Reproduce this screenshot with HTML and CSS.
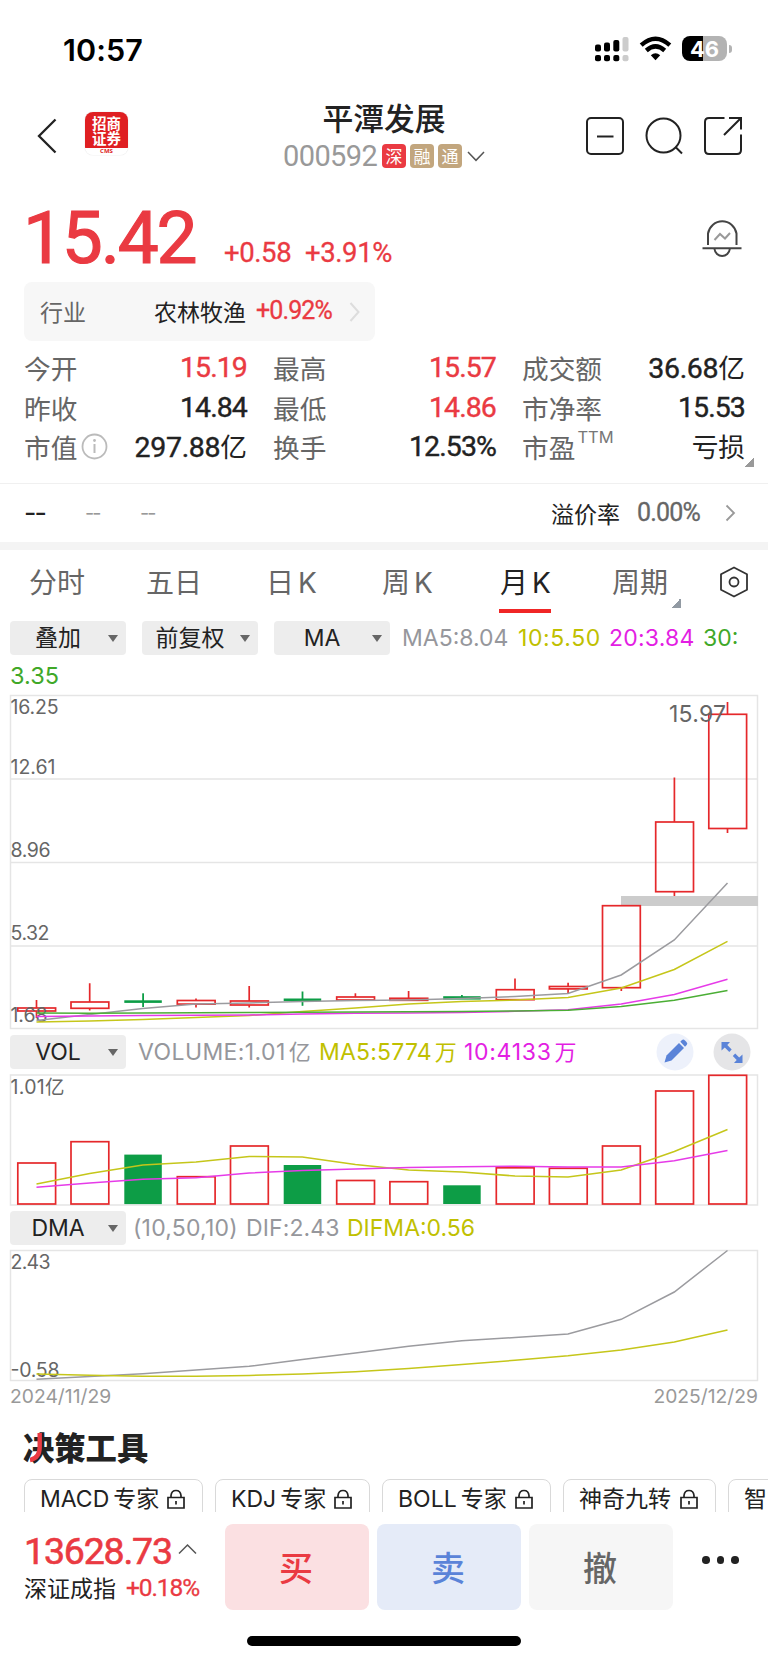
FILE: index.html
```html
<!DOCTYPE html>
<html lang="zh-CN">
<head>
<meta charset="utf-8">
<title>平潭发展 000592</title>
<link rel="stylesheet" href="styles.css">
</head>
<body>
<main class="phone">
  <div class="status">
    <span class="clock">10:57</span>
    <div class="status-icons">
      <svg width="36" height="26" viewBox="0 0 36 26">
        <g fill="#000"><rect x="1" y="8.500" width="6" height="7" rx="2"/><rect x="10" y="6.500" width="6" height="9" rx="2"/><rect x="19.300" y="4" width="6" height="11.500" rx="2"/>
        <rect x="1" y="19" width="6" height="6.300" rx="2"/><rect x="10" y="19" width="6" height="6.300" rx="2"/><rect x="19.300" y="19" width="6" height="6.300" rx="2"/></g>
        <g fill="#ccc"><rect x="28.500" y="1" width="6" height="14.500" rx="2"/><rect x="28.500" y="19" width="6" height="6.300" rx="2"/></g>
      </svg>
      <svg class="wifi" width="33" height="26" viewBox="0 0 33 26">
        <g fill="none" stroke="#000" stroke-width="4.400"><path d="M2.200 9.200Q16.500-3.600 30.800 9.200"/><path d="M7.300 14.500Q16.500 6.300 25.700 14.500"/></g>
        <path d="M16.500 24.200L11.800 19.300Q16.500 15.400 21.200 19.300Z"/>
      </svg>
      <div class="battery"><span>46</span></div><i class="nub"></i>
    </div>
  </div>

  <header class="header">
    <svg class="back" width="20" height="36" viewBox="0 0 20 36"><path d="M18.500 1.500L2 18L18.500 34.500" fill="none" stroke="#222" stroke-width="2.300"/></svg>
    <div class="logo"><span>招商</span><span>证券</span><b>CMS</b></div>
    <div class="title">
      <h1>平潭发展</h1>
      <div class="code"><span class="num">000592</span><i class="tag red">深</i><i class="tag">融</i><i class="tag">通</i>
        <svg width="18" height="11" viewBox="0 0 18 11"><path d="M1 1L9 9.300L17 1" fill="none" stroke="#555" stroke-width="1.500"/></svg></div>
    </div>
    <div class="actions">
      <svg width="40" height="40" viewBox="0 0 40 40"><rect x="2" y="2" width="36" height="36" rx="4"/><path d="M12 20.500H28.500"/></svg>
      <svg width="40" height="40" viewBox="0 0 40 40"><circle cx="19.500" cy="19.500" r="17"/><path d="M31.500 31L38 37.500"/></svg>
      <svg width="40" height="40" viewBox="0 0 40 40"><path d="M21.500 2H6Q2 2 2 6V34Q2 38 6 38H34Q38 38 38 34V18.500M26 2H38V13.500M38 2L21 19"/></svg>
    </div>
  </header>

  <section class="quote">
    <span class="price">15.42</span><span class="chg c1">+0.58</span><span class="chg">+3.91%</span>
    <svg class="bell" width="40" height="42" viewBox="0 0 40 42"><g fill="none" stroke="#444" stroke-width="2"><path d="M6 28V16.500A14.500 15 0 0 1 34.500 16.500V28"/><path d="M.5 31.300H39.500"/><path d="M12.500 32A7.700 8 0 0 0 27.800 32"/></g><path d="M12.500 23L18 17L23 21.500L28 16" fill="none" stroke="#999" stroke-width="2"/></svg>
  </section>

  <section class="industry">
    <span class="lab">行业</span><span class="name">农林牧渔</span><span class="pct">+0.92%</span>
    <svg width="12" height="22" viewBox="0 0 12 22"><path d="M1.500 2L9.500 11L1.500 20" fill="none" stroke="#ddd" stroke-width="2"/></svg>
  </section>

  <section class="stats">
    <div><span>今开</span><b class="up">15.19</b></div><div><span>最高</span><b class="up">15.57</b></div><div><span>成交额</span><b class="big">36.68<em>亿</em></b></div>
    <div><span>昨收</span><b>14.84</b></div><div><span>最低</span><b class="up">14.86</b></div><div><span>市净率</span><b>15.53</b></div>
    <div><span>市值</span><svg class="info" width="27" height="27" viewBox="0 0 27 27"><circle cx="13.500" cy="13.500" r="12" fill="none" stroke="#bbb" stroke-width="1.800"/><path d="M13.500 11V20" stroke="#bbb" stroke-width="2"/><circle cx="13.500" cy="7.500" r="1.400" fill="#bbb"/></svg><b class="big">297.88<em>亿</em></b></div><div><span>换手</span><b>12.53%</b></div><div class="pe"><span>市盈</span><sup>TTM</sup><b><em>亏损</em></b><i class="corner"></i></div>
  </section>

  <section class="premium">
    <span class="d1">--</span><span class="d2">--</span><span class="d2">--</span>
    <span class="plab">溢价率</span><span class="pval">0.00%</span>
    <svg width="11" height="18" viewBox="0 0 11 18"><path d="M1.500 1.500L9 9L1.500 16.500" fill="none" stroke="#999" stroke-width="1.800"/></svg>
  </section>

  <nav class="tabs">
    <span>分时</span><span>五日</span><span>日<i>K</i></span><span>周<i>K</i></span><span class="on">月<i>K</i></span><span class="cyc">周期<i class="corner"></i></span>
    <svg width="30" height="32" viewBox="0 0 30 32" fill="none" stroke="#333" stroke-width="1.800"><path d="M15 1.500L28 8.300V23.700L15 30.500L2 23.700V8.300Z" stroke-linejoin="round"/><circle cx="15" cy="16" r="4.500"/></svg>
  </nav>

  <section class="row main-row">
    <div class="pill">叠加</div><div class="pill wide">前复权</div><div class="pill">MA</div>
    <div class="ind"><span class="gray v1">MA5:8.04</span><span class="yel v2">10:5.50</span><span class="mag v3">20:3.84</span><span class="grn">30:</span></div>
  </section>
  <div class="wrap grn">3.35</div>

  <svg class="chart k" width="748" height="334" viewBox="10 695 748 334">
    <g class="grid"><rect x="10.500" y="695.500" width="747" height="333"/><path d="M10 779H758M10 862.500H758M10 946H758"/></g>
    <rect x="621" y="896" width="137" height="10" fill="#ccc"/>
    <g class="candle">
      <rect x="17.800" y="1008" width="37.800" height="3"/><path d="M36.500 1000V1008M36.500 1011V1018"/>
      <rect x="71" y="1002" width="37.800" height="6.300"/><path d="M89.700 983.300V1002M89.700 1008.300V1010.500"/>
      <rect x="177.300" y="1000.500" width="37.800" height="3.600"/><path d="M196 998.500V1000M196 1004V1007.500"/>
      <rect x="230.500" y="1001" width="37.800" height="4"/><path d="M249.200 986V1001M249.200 1005V1007.500"/>
      <rect x="336.700" y="997" width="37.800" height="3"/><path d="M355.400 993.300V997"/>
      <rect x="389.900" y="998.300" width="37.800" height="2"/><path d="M408.600 991V998"/>
      <rect x="496.300" y="989.700" width="37.800" height="10"/><path d="M515 978.500V989.700"/>
      <rect x="549.400" y="986.500" width="37.800" height="2.400"/><path d="M568.100 982.700V986.500M568.100 989V993.500"/>
      <rect x="602.500" y="905.700" width="37.800" height="82"/><path d="M621.300 987.700V991"/>
      <rect x="655.700" y="822" width="37.800" height="69.700"/><path d="M674.400 777.500V822M674.400 891.700V896"/>
      <rect x="708.800" y="714.300" width="37.800" height="114.200"/><path d="M727.500 702V714M727.500 828.500V833"/>
    </g>
    <g class="green">
      <rect x="124.300" y="1000.300" width="37.500" height="2.600"/><rect x="142.200" y="993.300" width="1.800" height="13.700"/>
      <rect x="283.700" y="998.500" width="37.500" height="2.600"/><rect x="301.600" y="991.500" width="1.800" height="14.300"/>
      <rect x="443.200" y="996.200" width="37.500" height="3.400"/><rect x="461" y="995" width="1.800" height="3"/>
    </g>
    <g class="axis"><text x="10.500" y="714" textLength="48">16.25</text><text x="10.500" y="774" textLength="45">12.61</text><text x="10.500" y="857" textLength="40">8.96</text><text x="10.500" y="939.500" textLength="39">5.32</text><text x="10.500" y="1022" textLength="37">1.68</text><text class="peak" x="669" y="722" textLength="57">15.97</text></g>
    <g class="lines">
      <polyline class="l-gray" points="36.500,1020.500 89.700,1014.500 142.800,1008.500 196,1004 249.200,1003 302.300,1001.500 355.400,1000.500 408.600,1000 461.800,998.500 515,996.500 568,993.500 621.200,975 674.300,940 727.500,883"/>
      <polyline class="l-yel" points="36.500,1022 89.700,1021 142.800,1019.500 196,1017.500 249.200,1015.500 302.300,1011.500 355.400,1008 408.600,1004 461.800,1001.500 515,1000 568,997.500 621.200,988 674.300,969.500 727.500,941.300"/>
      <polyline class="l-mag" points="36.500,1016.500 89.700,1016 142.800,1015.500 196,1015.300 249.200,1015 302.300,1014 355.400,1013.300 408.600,1013 461.800,1012.500 515,1011.300 568,1009.700 621.200,1004 674.300,994.500 727.500,979.300"/>
      <polyline class="l-grn" points="36.500,1013 89.700,1013.300 142.800,1013 196,1012.700 249.200,1012.500 302.300,1012.200 355.400,1012 408.600,1011.700 461.800,1011.500 515,1011 568,1010.300 621.200,1006.500 674.300,1000.300 727.500,990.500"/>
    </g>
  </svg>

  <section class="row sub-row vol-row">
    <div class="pill">VOL</div>
    <div class="ind"><span class="gray w1">VOLUME:1.01<em>亿</em></span><span class="yel w2">MA5:5774<em>万</em></span><span class="mag w3">10:4133<em>万</em></span></div>
    <svg class="tool" width="38" height="38" viewBox="0 0 38 38"><circle cx="19" cy="19" r="18.500" fill="#edf1fb"/><g fill="#5a83d8"><path d="M8.500 29.500L10.500 22.500L23 10L28 15L15.500 27.500Z"/><path d="M24.300 8.700L26 7Q27.500 6 29 7.500L30.500 9Q32 10.500 30.700 12L29 13.700Z"/></g></svg>
    <svg class="tool" width="38" height="38" viewBox="0 0 38 38"><circle cx="19" cy="19" r="18.500" fill="#e5e5e7"/><g fill="#5a83d8"><path d="M8.500 9H17L14.300 12L18.700 16.500L16.300 18.900L11.800 14.400L8.500 17.500Z"/><path d="M29.500 30H21L23.700 27L19.800 23L22.200 20.600L26.200 24.600L29.500 21.500Z"/></g></svg>
  </section>

  <svg class="chart v" width="748" height="131" viewBox="10 1075 748 131">
    <g class="grid"><rect x="10.500" y="1075" width="747" height="130"/></g>
    <g class="candle">
      <rect x="17.800" y="1163" width="37.800" height="41"/><rect x="71" y="1141.700" width="37.800" height="62.300"/><rect x="177.300" y="1176.700" width="37.800" height="27.300"/><rect x="230.500" y="1146" width="37.800" height="58"/><rect x="336.700" y="1180.500" width="37.800" height="23.500"/><rect x="389.900" y="1181.700" width="37.800" height="22.300"/><rect x="496.300" y="1167.800" width="37.800" height="36.200"/><rect x="549.400" y="1168.300" width="37.800" height="35.700"/><rect x="602.500" y="1146" width="37.800" height="58"/><rect x="655.700" y="1091" width="37.800" height="113"/><rect x="708.800" y="1075.300" width="37.800" height="128.700"/>
    </g>
    <g class="green"><rect x="124.300" y="1154.600" width="37.500" height="49.500"/><rect x="283.700" y="1165" width="37.500" height="39"/><rect x="443.200" y="1185.300" width="37.500" height="18.700"/></g>
    <g class="axis"><text x="10.500" y="1093.500" textLength="54">1.01亿</text></g>
    <g class="lines">
      <polyline class="l-yel" points="36.500,1184 89.700,1173.500 142.800,1165 196,1162 249.200,1156.500 302.300,1157 355.400,1164.500 408.600,1170 461.800,1172 515,1176 568,1177 621.200,1170 674.300,1151.500 727.500,1129.500"/>
      <polyline class="l-mag" points="36.500,1187.300 89.700,1183 142.800,1179.300 196,1177.700 249.200,1173 302.300,1170.500 355.400,1169 408.600,1167.500 461.800,1166.800 515,1166.300 568,1167 621.200,1167 674.300,1160.700 727.500,1150.500"/>
    </g>
  </svg>

  <section class="row sub-row">
    <div class="pill">DMA</div>
    <div class="ind"><span class="gray x1">(10,50,10)</span><span class="gray x2">DIF:2.43</span><span class="yel">DIFMA:0.56</span></div>
  </section>

  <svg class="chart d" width="748" height="131" viewBox="10 1250 748 131">
    <g class="grid"><rect x="10.500" y="1250.500" width="747" height="130"/></g>
    <g class="axis"><text x="10.500" y="1269" textLength="40">2.43</text><text x="10.500" y="1376.500" textLength="49">-0.58</text></g>
    <g class="lines">
      <polyline class="l-gray" points="36.500,1379.300 89.700,1376.500 142.800,1373.700 196,1370 249.200,1366.300 302.300,1359.500 355.400,1353 408.600,1346.300 461.800,1340.800 515,1337.500 568,1334 621.200,1319.300 674.300,1292 727.500,1250.500"/>
      <polyline class="l-yel" points="36.500,1374 89.700,1375.300 142.800,1376.200 196,1376.200 249.200,1375.500 302.300,1374 355.400,1371.800 408.600,1368.500 461.800,1364.500 515,1360.300 568,1355.800 621.200,1350 674.300,1342 727.500,1330"/>
    </g>
  </svg>
  <div class="dates"><span>2024/11/29</span><span>2025/12/29</span></div>

  <h2 class="tools-title">决策工具<svg width="14" height="30" viewBox="0 0 14 30"><path d="M9.700 0V14Q9.700 25 0 27" fill="none" stroke="#ea3a42" stroke-width="4.400"/></svg></h2>
  <div class="chips">
    <div class="chip a">MACD<em>专家</em><svg viewBox="0 0 18 20"><path d="M1 8.500H17V19H1ZM4 8V6.500Q4.500 1.500 9 1.500T14 6.500V8M9 12V15.500"/></svg></div>
    <div class="chip b">KDJ<em>专家</em><svg viewBox="0 0 18 20"><path d="M1 8.500H17V19H1ZM4 8V6.500Q4.500 1.500 9 1.500T14 6.500V8M9 12V15.500"/></svg></div>
    <div class="chip c">BOLL<em>专家</em><svg viewBox="0 0 18 20"><path d="M1 8.500H17V19H1ZM4 8V6.500Q4.500 1.500 9 1.500T14 6.500V8M9 12V15.500"/></svg></div>
    <div class="chip d">神奇九转<svg viewBox="0 0 18 20"><path d="M1 8.500H17V19H1ZM4 8V6.500Q4.500 1.500 9 1.500T14 6.500V8M9 12V15.500"/></svg></div>
    <div class="chip e">智能</div>
  </div>

  <footer class="trade">
    <div class="index">
      <div class="idx"><span>13628.73</span><svg width="19" height="12" viewBox="0 0 19 12"><path d="M1 10.500L9.500 2L18 10.500" fill="none" stroke="#555" stroke-width="1.500"/></svg></div>
      <div class="idx-sub"><span>深证成指</span><b>+0.18%</b></div>
    </div>
    <div class="btn buy">买</div><div class="btn sell">卖</div><div class="btn cancel">撤</div>
    <div class="more"><i></i><i></i><i></i></div>
  </footer>
  <div class="home"></div>
</main>
</body>
</html>
```

FILE: styles.css
```css
* { box-sizing: border-box; }
body { margin: 0; background: #fff; color: #222; font-family: Inter, "Noto Sans CJK SC", sans-serif; }
i, em { font-style: normal; }
svg { display: block; flex: none; }
.phone { width: 768px; height: 1663px; overflow: hidden; background: #fff; display: flex; flex-direction: column; }
.phone > * { flex: none; }

.status { height: 100px; display: flex; justify-content: space-between; padding: 31px 36px 0 63px; color: #000; }
.clock { font-size: 30.500px; line-height: 37px; font-weight: 600; letter-spacing: .1px; }
.status-icons { display: flex; align-items: flex-start; padding-top: 5px; }
.wifi { margin-left: 9px; }
.battery { margin-left: 10px; width: 45px; height: 25px; border-radius: 8px; background: linear-gradient(90deg, #000 21px, #b3b3b3 21px); color: #fff; font: 700 22px/26px Inter, sans-serif; text-align: center; }
.nub { width: 3px; height: 8px; margin: 9px 0 0 2px; border-radius: 0 4px 4px 0; background: #b3b3b3; }

.header { height: 92px; display: flex; padding-left: 37px; }
.back { margin-top: 18px; }
.logo { margin: 12px 0 0 28px; width: 43px; height: 43px; border-radius: 8px; background: linear-gradient(#df1f22 35.500px, #fff 35.500px); box-shadow: 0 0 1px #bbb; display: flex; flex-direction: column; align-items: center; color: #fff; overflow: hidden; }
.logo span { font: 700 14.500px/15px "Noto Sans CJK SC", sans-serif; }
.logo span:first-child { margin-top: 2.500px; }
.logo b { font: 700 6px/8px "Open Sans", sans-serif; color: #d22; margin-top: 2.500px; }
.title { width: 260px; margin: -2px 0 0 126px; display: flex; flex-direction: column; align-items: center; }
.title h1 { margin: 0; font: 500 30.800px/38px "Noto Sans CJK SC", sans-serif; width: 260px; text-align: center; }
.code { display: flex; align-items: center; height: 36px; margin-top: 2px; }
.num { font: 400 29px/34px Roboto, sans-serif; color: #999; margin-right: 5px; width: 94px; letter-spacing: -.6px; }
.tag { width: 24px; height: 24px; border-radius: 4px; background: #c2a67e; color: #fff; font: 400 17px/23px "Noto Sans CJK SC", sans-serif; text-align: center; margin-right: 4px; }
.tag.red { background: #ea3a42; }
.code svg { margin-left: 1px; }
.actions { display: flex; gap: 19px; margin: 16px 0 0 71px; }
.actions svg { fill: none; stroke: #222; stroke-width: 2; }

.quote { height: 90px; display: flex; align-items: flex-start; padding-left: 23px; color: #ea3a42; font-family: Roboto, sans-serif; }
.price { font-size: 73px; line-height: 92px; font-weight: 400; letter-spacing: -2.200px; width: 201px; -webkit-text-stroke: 1.200px; }
.chg { font-size: 27.500px; line-height: 32px; margin-top: 45px; letter-spacing: -.4px; -webkit-text-stroke: .3px; }
.c1 { width: 81px; }
.bell { margin: 25px 26px 0 auto; }

.industry { margin-left: 24px; width: 351px; height: 59px; border-radius: 8px; background: #f7f7f7; display: flex; align-items: center; padding-left: 16px; font: 400 23px/34px "Noto Sans CJK SC", sans-serif; }
.industry > span { margin-top: -1px; }
.lab { color: #666; width: 114px; }
.name { width: 102px; }
.pct { font: 400 25px/30px Roboto, sans-serif; color: #ea3a42; letter-spacing: -.9px; width: 93px; -webkit-text-stroke: .3px; }

.stats { display: grid; grid-template-columns: 223px 223px 223px; column-gap: 26px; grid-auto-rows: 39.400px; padding: 7px 0 0 24px; height: 142px; }
.stats > div { display: flex; align-items: center; position: relative; }
.stats span { font: 400 26.700px/39px "Noto Sans CJK SC", sans-serif; color: #666; }
.stats b { margin-left: auto; font: 400 28.500px/39px Roboto, sans-serif; letter-spacing: -.9px; -webkit-text-stroke: .4px; }
.stats .big { letter-spacing: -.3px; }
.stats b em { font: 400 26.700px/39px "Noto Sans CJK SC", sans-serif; letter-spacing: 0; -webkit-text-stroke: 0; }
.stats .up { color: #ea3a42; }
.info { margin-left: 4px; }
.stats sup { font-size: 16.500px; line-height: 20px; color: #777; margin: -18px 0 0 2px; letter-spacing: 0; }
.corner { position: absolute; width: 10px; height: 10px; background: linear-gradient(135deg, transparent 50%, #999 50%); }
.pe .corner { right: -9px; bottom: -1px; }

.premium { height: 67px; border-top: 1px solid #f0f0f0; border-bottom: 8px solid #f4f4f4; display: flex; align-items: center; padding: 0 0 0 24px; }
.d1 { font: 400 27px/30px Inter, sans-serif; width: 61px; letter-spacing: -2px; }
.d2 { font: 400 20px/30px Inter, sans-serif; width: 55px; color: #999; letter-spacing: -2px; }
.plab { font: 400 23px/34px "Noto Sans CJK SC", sans-serif; margin: -1px 0 0 356px; width: 86px; }
.pval { font: 400 25px/34px Roboto, sans-serif; color: #666; width: 88px; letter-spacing: -.8px; -webkit-text-stroke: .3px; }

.tabs { height: 69px; display: flex; padding-top: 7px; font: 400 28px/48px "Noto Sans CJK SC", sans-serif; color: #666; }
.tabs span { position: relative; width: 118px; }
.tabs span:first-child { margin-left: 29px; width: 117px; }
.tabs span:nth-child(2) { width: 120px; }
.tabs span:nth-child(3) { width: 116px; }
.tabs i { font-family: Inter, sans-serif; margin-left: 4px; font-size: 28px; }
.tabs .on { color: #222; width: 112px; }
.tabs .on::after { content: ""; position: absolute; left: -1px; top: 51.500px; width: 52px; height: 4px; background: #f02626; }
.tabs .cyc { width: 107px; }
.tabs .corner { left: 59px; top: 41px; margin: 0; background: linear-gradient(135deg, transparent 50%, #929aa3 50%); }
.tabs svg { margin-top: 9px; }

.row { display: flex; align-items: center; padding-left: 10px; }
.main-row { height: 38px; }
.main-row .pill { margin-right: 16px; }
.main-row .ind { margin-left: -4px; }
.pill { width: 116px; height: 34px; border-radius: 4px; background: #ededed; color: #222; font-size: 23px; line-height: 34px; text-align: center; padding-right: 20px; position: relative; }
.pill.wide { padding-right: 20px; }
.pill::after { content: ""; position: absolute; right: 8px; top: 14px; border: 5px solid transparent; border-top: 7px solid #666; border-bottom: 0; }
.ind { display: flex; font-size: 23px; line-height: 34px; white-space: nowrap; }
.gray { color: #96979c; } .yel { color: #c0c000; } .mag { color: #e31ee3; } .grn { color: #40a828; }
.v1 { width: 116px; } .v2 { width: 91px; letter-spacing: .6px; } .v3 { width: 94px; letter-spacing: .2px; }
.wrap { height: 38px; font-size: 23.500px; line-height: 37px; padding-left: 10px; }
.chart { margin-left: 10px; overflow: visible; }
.grid { fill: none; stroke: #e5e5e5; stroke-width: 1.500; }
.candle { fill: none; stroke: #e5282b; stroke-width: 1.700; }
.green { fill: #0d9d46; }
.axis { font: 400 19.500px Inter, "Noto Sans CJK SC", sans-serif; fill: #666; }
.axis .peak { font-size: 23px; }
.lines { fill: none; stroke-width: 1.500; }
.l-gray { stroke: #9b9b9f; } .l-yel { stroke: #c5c61a; } .l-mag { stroke: #e63be8; } .l-grn { stroke: #4bae35; }
.sub-row { height: 44px; }
.vol-row { height: 46px; }
.sub-row .ind { margin-left: 12px; width: 518px; }
.ind em { margin-left: 3px; font-size: 22px; }
.w1 { width: 181px; letter-spacing: .4px; } .w2 { width: 145px; letter-spacing: .2px; } .w3 { letter-spacing: .7px; }
.x1 { width: 113px; margin-left: -5px; letter-spacing: .2px; } .x2 { width: 101px; letter-spacing: .1px; }
.tool + .tool { margin-left: 19px; }
.dates { height: 39px; display: flex; justify-content: space-between; padding: 3px 10px 0; font-size: 19.300px; line-height: 25px; color: #999; }

.tools-title { margin: 0; position: relative; height: 59px; padding-left: 23px; font: 900 31.300px/54px "Noto Sans CJK SC", sans-serif; }
.tools-title svg { position: absolute; left: 30px; top: 13px; }
.chips { height: 33px; overflow: hidden; display: flex; gap: 12px; padding-left: 24px; }
.chip { flex: none; height: 60px; border: 1.500px solid #d9d9d9; border-radius: 8px; padding: 0 17.500px 0 15px; display: flex; font-size: 23px; line-height: 38px; white-space: nowrap; }
.chip em { margin-left: 4px; }
.chip svg { width: 18px; height: 20px; margin: 9px 0 0 auto; fill: none; stroke: #222; stroke-width: 1.700; }
.a { width: 179px; } .b { width: 155px; } .c { width: 169px; } .chip.d { width: 153px; } .e { width: 110px; }

.trade { height: 98px; display: flex; align-items: flex-start; padding: 12px 0 0 24px; }
.index { width: 201px; padding-top: 5px; }
.idx { display: flex; align-items: center; font: 400 37.500px/44px Roboto, sans-serif; color: #ea3a42; }
.idx span { width: 154px; letter-spacing: -1.200px; -webkit-text-stroke: .6px; }
.idx svg { margin-top: -5px; }
.idx-sub { display: flex; font: 400 23px/31px "Noto Sans CJK SC", sans-serif; margin-top: -1px; }
.idx-sub span { width: 102px; }
.idx-sub b { font: 400 24.500px/31px Roboto, sans-serif; color: #ea3a42; letter-spacing: -1.100px; -webkit-text-stroke: .3px; }
.btn { width: 144px; height: 86px; border-radius: 8px; margin-right: 8px; padding-right: 2px; text-align: center; font: 500 34px/86px "Noto Sans CJK SC", sans-serif; }
.buy { background: #fbe0e2; color: #ea3a42; }
.sell { background: #e5ebf8; color: #5a83d8; }
.cancel { background: #f6f6f6; color: #666; }
.more { display: flex; gap: 7px; margin: 32px 0 0 21px; }
.more i { width: 7.600px; height: 7.600px; border-radius: 50%; background: #222; }
.home { margin: 26px 0 0 247px; width: 274px; height: 10px; border-radius: 5px; background: #000; }
```
